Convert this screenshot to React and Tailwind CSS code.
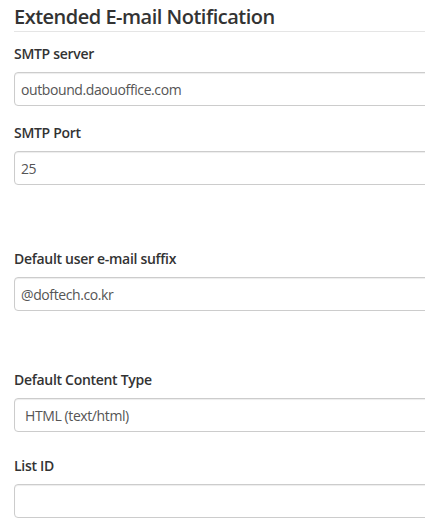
import React from 'react';

const font = { fontFamily: '"Open Sans", "Noto Sans", sans-serif' };

function Field({ label, value, className = '', pad = 'pl-[6px]' }) {
  return (
    <div className={className}>
      <label className="block h-[20px] text-[14px] leading-[20px] font-semibold text-[#333] tracking-[-0.3px]">
        {label}
      </label>
      <div
        className={`mt-[8px] h-[34px] w-[440px] rounded-[4px] border border-[#ccc] bg-white shadow-[inset_0_1px_1px_rgba(0,0,0,0.075)] flex items-center ${pad} text-[14px] text-[#555] tracking-[-0.4px]`}
      >
        {value}
      </div>
    </div>
  );
}

export default function App() {
  return (
    <div className="w-[425px] h-[525px] overflow-hidden bg-white" style={font}>
      <div className="pl-[14px] w-[470px]">
        <h2 className="pt-[3px] h-[32px] leading-[28px] text-[20px] font-semibold text-[#333] border-b border-[#e5e5e5] tracking-[-0.5px]">
          Extended E-mail Notification
        </h2>
        <Field className="mt-[12px]" label="SMTP server" value="outbound.daouoffice.com" />
        <Field className="mt-[17px]" label="SMTP Port" value="25" />
        <Field className="mt-[64px]" label="Default user e-mail suffix" value="@doftech.co.kr" />
        <Field className="mt-[59px]" label="Default Content Type" value="HTML (text/html)" pad="pl-[10px]" />
        <Field className="mt-[24px]" label="List ID" value="" />
      </div>
    </div>
  );
}
